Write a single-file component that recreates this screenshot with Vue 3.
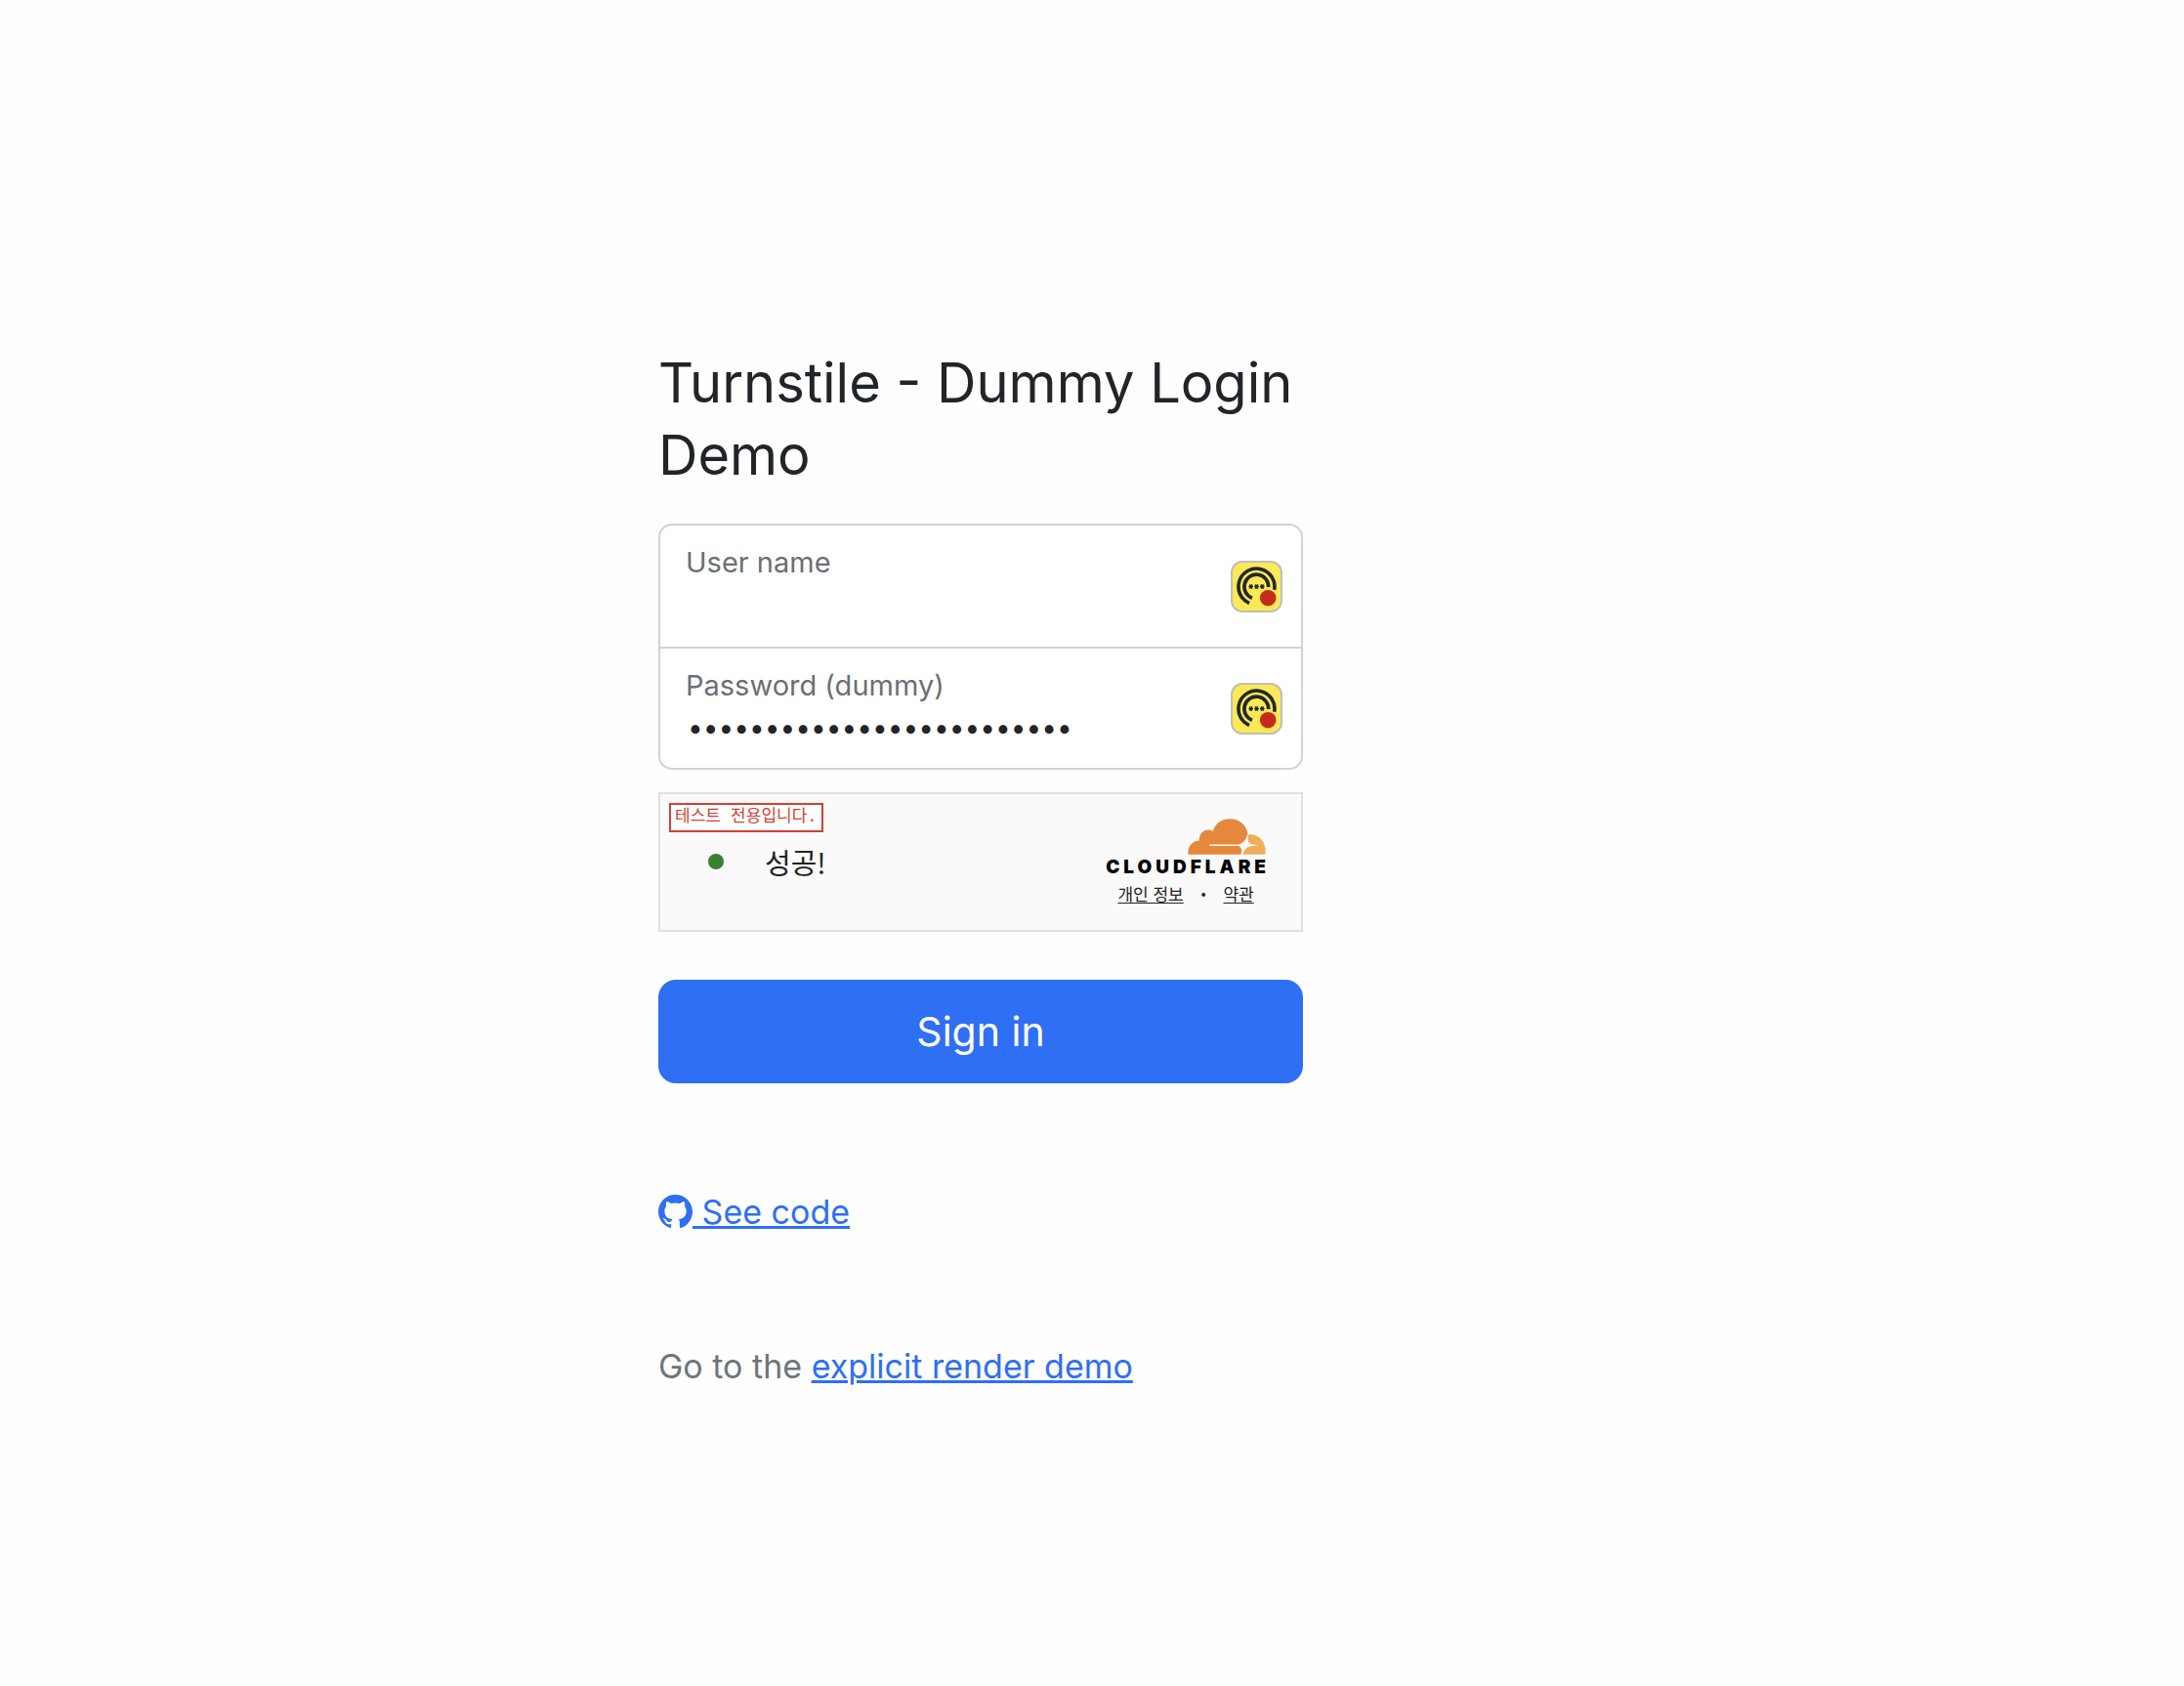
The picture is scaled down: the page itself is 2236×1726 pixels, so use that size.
<script setup>
import { ref } from 'vue'

const username = ref('')
const password = ref('correct-horse-battery-dum')
</script>

<template>
  <main class="page">
    <form class="login" @submit.prevent>
      <h1 class="title">Turnstile - Dummy Login Demo</h1>

      <div class="fields">
        <div class="field">
          <label for="user">User name</label>
          <input id="user" v-model="username" type="text" autocomplete="off" />
          <button class="autofill" type="button" aria-label="Fill user name">
            <svg viewBox="0 0 53 53">
              <g fill="none" stroke="#24272a" stroke-width="3.6">
                <path d="M44.7 29.7A18.5 18.5 0 1 0 19 43.5" />
                <path d="M38.7 27A12.4 12.4 0 1 0 22 38.2" />
              </g>
              <path d="M18.4 26.5h4.6M19.5 24.3l2.4 4.4M21.9 24.3l-2.4 4.4M24.2 26.5h4.6M25.3 24.3l2.4 4.4M27.7 24.3l-2.4 4.4M30 26.5h4.6M31.1 24.3l2.4 4.4M33.5 24.3l-2.4 4.4" stroke="#24272a" stroke-width="1.5" />
              <circle cx="38.2" cy="38.2" r="8.3" fill="#c42b1c" />
            </svg>
          </button>
        </div>
        <div class="field">
          <label for="pass">Password (dummy)</label>
          <input id="pass" v-model="password" type="password" autocomplete="off" />
          <button class="autofill" type="button" aria-label="Fill password">
            <svg viewBox="0 0 53 53">
              <g fill="none" stroke="#24272a" stroke-width="3.6">
                <path d="M44.7 29.7A18.5 18.5 0 1 0 19 43.5" />
                <path d="M38.7 27A12.4 12.4 0 1 0 22 38.2" />
              </g>
              <path d="M18.4 26.5h4.6M19.5 24.3l2.4 4.4M21.9 24.3l-2.4 4.4M24.2 26.5h4.6M25.3 24.3l2.4 4.4M27.7 24.3l-2.4 4.4M30 26.5h4.6M31.1 24.3l2.4 4.4M33.5 24.3l-2.4 4.4" stroke="#24272a" stroke-width="1.5" />
              <circle cx="38.2" cy="38.2" r="8.3" fill="#c42b1c" />
            </svg>
          </button>
        </div>
      </div>

      <section class="turnstile" lang="ko">
        <p class="test-badge">테스트 전용입니다.</p>
        <div class="status">
          <span class="dot"></span>
          <span>성공!</span>
        </div>
        <div class="brand">
          <svg class="cloud" viewBox="344 113 242 112">
            <path d="M345 224V216C346 196 361 181 380 181C377 158 400 139 422 152C430 128 449 114 475 114C503 114 526 133 530 160C526 176 519 187 503 193H411V198H501C507 200 511 206 511 213L509 224Z" fill="#e6883c" />
            <path d="M533 162C562 160 584 181 585 212L584 224H515C517 210 526 202 541 198L564 196L541 192C530 187 528 176 533 162Z" fill="#f1ae58" />
          </svg>
          <span class="wordmark">CLOUDFLARE</span>
          <nav class="legal">
            <a href="#privacy">개인 정보</a>
            <span class="sep">•</span>
            <a href="#terms">약관</a>
          </nav>
        </div>
      </section>

      <button class="submit" type="submit">Sign in</button>
    </form>

    <p class="code">
      <a href="#code"><svg class="github" viewBox="0 0 16 16" fill="currentColor"><path d="M8 0C3.58 0 0 3.58 0 8c0 3.54 2.29 6.53 5.47 7.59.4.07.55-.17.55-.38 0-.19-.01-.82-.01-1.49-2.01.37-2.53-.49-2.69-.94-.09-.23-.48-.94-.82-1.13-.28-.15-.68-.52-.01-.53.63-.01 1.08.58 1.23.82.72 1.21 1.87.87 2.33.66.07-.52.28-.87.51-1.07-1.78-.2-3.64-.89-3.64-3.95 0-.87.31-1.59.82-2.15-.08-.2-.36-1.02.08-2.12 0 0 .67-.21 2.2.82.64-.18 1.32-.27 2-.27s1.36.09 2 .27c1.53-1.04 2.2-.82 2.2-.82.44 1.1.16 1.92.08 2.12.51.56.82 1.27.82 2.15 0 3.07-1.87 3.75-3.65 3.95.29.25.54.73.54 1.48 0 1.07-.01 1.93-.01 2.2 0 .21.15.46.55.38A8.01 8.01 0 0 0 16 8c0-4.42-3.58-8-8-8" /></svg>&nbsp;See code</a>
    </p>
    <p class="more">Go to the <a href="#explicit">explicit render demo</a></p>
  </main>
</template>

<style>
body {
  background: #fefefe;
}
</style>

<style scoped>
.page {
  box-sizing: border-box;
  max-width: 888px;
  margin: 0 auto;
  padding: 355px 0 280px;
  color: #212529;
  font: 400 34px/52px Inter, "Noto Sans CJK KR", sans-serif;
}
.login {
  max-width: 660px;
}
.title {
  margin: 0 0 33px;
  font-size: 56px;
  font-weight: 400;
  line-height: 74px;
}
.fields {
  border: 2px solid #ced4da;
  border-radius: 14px;
  background: #fff;
}
.field {
  position: relative;
  box-sizing: border-box;
  display: flex;
  flex-direction: column;
  height: 124px;
}
.field + .field {
  border-top: 2px solid #ced4da;
}
.field label {
  padding: 18px 26px 0;
  color: #6c6f75;
  font-size: 29px;
  line-height: 40px;
}
.field input {
  box-sizing: border-box;
  width: 100%;
  height: 46px;
  padding: 0 28px;
  border: 0;
  outline: 0;
  background: transparent;
  color: #212529;
  font: 28px/46px Inter, sans-serif;
}
.autofill {
  position: absolute;
  top: 50%;
  right: 19px;
  box-sizing: border-box;
  width: 53px;
  height: 53px;
  margin-top: -26px;
  padding: 0;
  border: 2px solid #c0bfba;
  border-radius: 12px;
  background: #fce955;
}
.autofill svg {
  display: block;
  width: 53px;
  height: 53px;
  margin: -2px;
}
.turnstile {
  position: relative;
  box-sizing: border-box;
  display: flex;
  align-items: center;
  justify-content: space-between;
  height: 143px;
  margin: 23px 0 49px;
  padding: 0 36px 0 49px;
  border: 2px solid #e0e0e0;
  background: #fafafa;
}
.test-badge {
  position: absolute;
  top: 9px;
  left: 9px;
  margin: 0;
  padding: 0 4px;
  border: 2px solid #d43f33;
  background: #fff;
  color: #d43f33;
  font: 17px/26px "Liberation Mono", "Noto Sans CJK KR", monospace;
}
.status {
  display: flex;
  align-items: center;
  gap: 42px;
  margin-bottom: 2px;
  color: #232323;
  font-family: "Noto Sans CJK KR", sans-serif;
  font-size: 29px;
  line-height: 40px;
}
.dot {
  width: 16px;
  height: 16px;
  border-radius: 50%;
  background: #38812f;
}
.brand {
  display: flex;
  flex-direction: column;
  align-items: center;
  padding-top: 2px;
}
.cloud {
  align-self: flex-end;
  width: 80px;
  height: 37px;
}
.wordmark {
  margin-right: -4px;
  color: #000;
  font-size: 19px;
  font-weight: 900;
  line-height: 26px;
  letter-spacing: 4px;
}
.legal {
  display: flex;
  gap: 17px;
  color: #232323;
  font: 17px/28px "Noto Sans CJK KR", sans-serif;
}
.page .legal a {
  color: inherit;
  text-underline-offset: 2px;
}
.sep {
  font-family: Inter, sans-serif;
  font-size: 12px;
}
.submit {
  display: block;
  width: 100%;
  height: 106px;
  padding: 0;
  border: 0;
  border-radius: 18px;
  background: #2f6ff4;
  color: #fff;
  font: 400 41px/64px Inter, sans-serif;
}
.page a {
  text-underline-offset: 2px;
}
.code a,
.more a {
  color: #2f6ff4;
  text-decoration-thickness: 3px;
}
.code {
  margin: 106px 0;
}
.github {
  width: 35px;
  height: 35px;
  vertical-align: -5px;
}
.more {
  margin: 0;
  color: #6c757d;
}
</style>
